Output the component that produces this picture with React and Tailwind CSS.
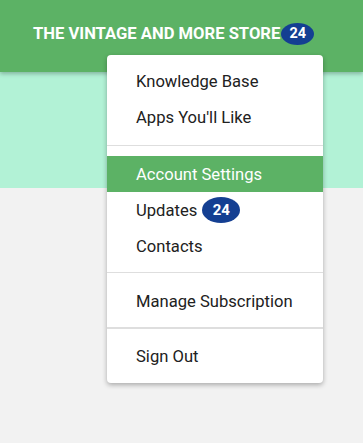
const sections = [
  [{label: "Knowledge Base"}, {label: "Apps You'll Like"}],
  [{label: "Account Settings", active: true}, {label: "Updates", badge: 24}, {label: "Contacts"}],
  [{label: "Manage Subscription"}],
  [{label: "Sign Out"}],
];

function Badge({count, className}) {
  return (
    <span
      className={`inline-flex items-center justify-center rounded-[50%] bg-[#143f92] font-bold text-white ${className}`}
    >
      {count}
    </span>
  );
}

function MenuItem({label, active, badge}) {
  return (
    <div
      className={`flex h-9 items-center gap-[5px] pl-[29px] pt-[3px] text-[16.6px] ${
        active ? "bg-[#5cb265] text-white" : "text-[#212121]"
      }`}
    >
      <span>{label}</span>
      {badge != null && <Badge count={badge} className="-mt-[3px] h-[26px] w-[38px] text-[15px]" />}
    </div>
  );
}

export default function App() {
  return (
    <div className="relative h-[443px] w-[363px] overflow-hidden bg-[#f2f2f2] font-['Roboto',sans-serif]">
      <header className="relative z-10 flex h-[72px] items-start bg-[#5cb265] pl-[33px] pt-[23px] shadow-[0_2px_4px_rgba(0,0,0,0.25)]">
        <span className="text-[16.6px] font-bold leading-[22px] text-white">
          THE VINTAGE AND MORE STORE
        </span>
        <Badge count={24} className="ml-[1px] h-[22px] w-[33px] text-[14.5px]" />
      </header>
      <div className="h-[116px] bg-[#b2f2d6]" />

      <div className="absolute left-[107px] top-[55px] z-20 w-[216px] rounded-[4px] bg-white pb-[9px] pt-[8px] shadow-[0_2px_5px_rgba(0,0,0,0.3)]">
        {sections.map((items, i) => (
          <div key={i}>
            {i > 0 && (
              <div
                className={`border-t border-[#dedede] ${
                  i === 1 ? "mb-[10px] mt-[10px]" : i === 2 ? "mb-[10px] mt-[8px]" : "mb-[9px] mt-[8px] border-t-2"
                }`}
              />
            )}
            {items.map((item) => (
              <MenuItem key={item.label} {...item} />
            ))}
          </div>
        ))}
      </div>
    </div>
  );
}
